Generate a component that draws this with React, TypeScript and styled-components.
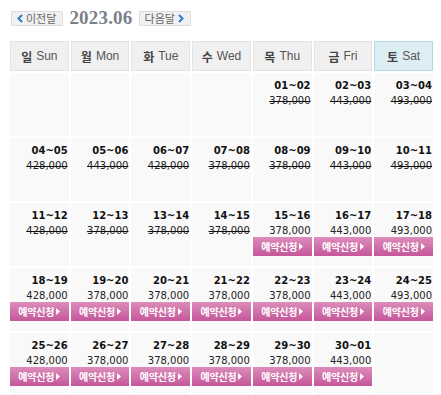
import React from "react";
import styled, { createGlobalStyle } from "styled-components";

const Global = createGlobalStyle`
  html, body { margin: 0; padding: 0; background: #fff; }
  body { font-family: "Liberation Sans", "Noto Sans CJK KR", sans-serif; }
`;

const Page = styled.div`
  padding: 10px 0 0 8px;
  width: 427px;
`;

const Nav = styled.div`
  display: flex;
  align-items: center;
  gap: 6px;
  height: 16px;
  padding-left: 3px;
  margin-bottom: 13px;
`;

const NavButton = styled.button`
  display: flex;
  align-items: center;
  gap: 3px;
  height: 15px;
  padding: 0 6px 0 5px;
  background: #f1f1f1;
  border: 1px solid #dcdcdc;
  border-radius: 1px;
  font-family: "Noto Sans CJK KR", sans-serif;
  font-size: 11px;
  line-height: 13px;
  color: #666;
  cursor: pointer;
`;

const Chevron = styled.svg`
  width: 6px;
  height: 9px;
  display: block;
`;

const Title = styled.div`
  font-family: "Liberation Serif", serif;
  font-weight: bold;
  font-size: 19px;
  line-height: 16px;
  color: #7b8089;
  letter-spacing: 0.2px;
`;

const Grid = styled.div`
  display: grid;
  grid-template-columns: repeat(7, 1fr);
  grid-auto-rows: auto;
  gap: 2px;
  padding: 2px;
`;

const Head = styled.div<{ $sat?: boolean }>`
  height: 28px;
  display: flex;
  align-items: center;
  justify-content: center;
  gap: 4px;
  background: ${(p) => (p.$sat ? "#dcedf4" : "#f0f0f0")};
  border: 1px solid ${(p) => (p.$sat ? "#b9d5e5" : "#e3e3e3")};
  font-size: 12px;
  color: #555;
`;

const HeadKo = styled.span`
  font-family: "Noto Sans CJK KR", sans-serif;
  font-weight: bold;
  color: #444;
  font-size: 12px;
`;

const Cell = styled.div`
  background: #f9f9f9;
  height: 63px;
  padding-top: 7px;
  box-sizing: border-box;
  display: flex;
  flex-direction: column;
  align-items: stretch;
  text-align: right;
  font-family: "DejaVu Sans", Verdana, sans-serif;
`;

const DateText = styled.div`
  font-size: 10px;
  line-height: 12px;
  font-weight: bold;
  color: #111;
  padding-right: 1px;
`;

const Price = styled.div<{ $closed?: boolean }>`
  margin-top: 3px;
  font-size: 10px;
  line-height: 12px;
  color: #222;
  padding-right: 1px;
  text-decoration: ${(p) => (p.$closed ? "line-through" : "none")};
  text-decoration-color: #111;
`;

const Reserve = styled.button`
  margin-top: 0;
  height: 19px;
  width: 100%;
  border: 0;
  padding: 0;
  background: linear-gradient(#dc8dba, #c5569a);
  color: #fff;
  display: flex;
  align-items: center;
  justify-content: center;
  gap: 2px;
  font-family: "Noto Sans CJK KR", sans-serif;
  font-weight: bold;
  font-size: 10px;
  letter-spacing: -0.2px;
  cursor: pointer;
`;

const Tri = styled.svg`
  width: 4px;
  height: 7px;
  display: block;
`;

type Day = { d: string; p: string; open?: boolean } | null;

const rows: Day[][] = [
  [null, null, null, null,
    { d: "01~02", p: "378,000" },
    { d: "02~03", p: "443,000" },
    { d: "03~04", p: "493,000" }],
  [{ d: "04~05", p: "428,000" },
    { d: "05~06", p: "443,000" },
    { d: "06~07", p: "428,000" },
    { d: "07~08", p: "378,000" },
    { d: "08~09", p: "378,000" },
    { d: "09~10", p: "443,000" },
    { d: "10~11", p: "493,000" }],
  [{ d: "11~12", p: "428,000" },
    { d: "12~13", p: "378,000" },
    { d: "13~14", p: "378,000" },
    { d: "14~15", p: "378,000" },
    { d: "15~16", p: "378,000", open: true },
    { d: "16~17", p: "443,000", open: true },
    { d: "17~18", p: "493,000", open: true }],
  [{ d: "18~19", p: "428,000", open: true },
    { d: "19~20", p: "378,000", open: true },
    { d: "20~21", p: "378,000", open: true },
    { d: "21~22", p: "378,000", open: true },
    { d: "22~23", p: "378,000", open: true },
    { d: "23~24", p: "443,000", open: true },
    { d: "24~25", p: "493,000", open: true }],
  [{ d: "25~26", p: "428,000", open: true },
    { d: "26~27", p: "378,000", open: true },
    { d: "27~28", p: "378,000", open: true },
    { d: "28~29", p: "378,000", open: true },
    { d: "29~30", p: "378,000", open: true },
    { d: "30~01", p: "443,000", open: true },
    null],
];

const heads = [
  ["일", "Sun"], ["월", "Mon"], ["화", "Tue"], ["수", "Wed"],
  ["목", "Thu"], ["금", "Fri"], ["토", "Sat"],
];

export default function App() {
  return (
    <>
      <Global />
      <Page>
        <Nav>
          <NavButton>
            <Chevron viewBox="0 0 6 9">
              <path d="M5 1 L1.5 4.5 L5 8" stroke="#2f78d0" strokeWidth="2" fill="none" />
            </Chevron>
            이전달
          </NavButton>
          <Title>2023.06</Title>
          <NavButton>
            다음달
            <Chevron viewBox="0 0 6 9">
              <path d="M1 1 L4.5 4.5 L1 8" stroke="#2f78d0" strokeWidth="2" fill="none" />
            </Chevron>
          </NavButton>
        </Nav>
        <Grid>
          {heads.map(([k, e], i) => (
            <Head key={e} $sat={i === 6}>
              <HeadKo>{k}</HeadKo>
              <span>{e}</span>
            </Head>
          ))}
          {rows.flat().map((c, i) =>
            c ? (
              <Cell key={i}>
                <DateText>{c.d}</DateText>
                <Price $closed={!c.open}>{c.p}</Price>
                {c.open && (
                  <Reserve>
                    예약신청
                    <Tri viewBox="0 0 4 7">
                      <path d="M0 0 L4 3.5 L0 7 Z" fill="#fff" />
                    </Tri>
                  </Reserve>
                )}
              </Cell>
            ) : (
              <Cell key={i} />
            )
          )}
        </Grid>
      </Page>
    </>
  );
}
